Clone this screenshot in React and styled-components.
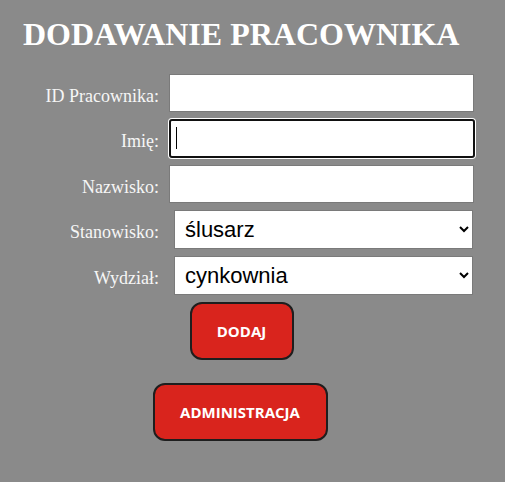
import React from 'react'
import styled, { createGlobalStyle } from 'styled-components'

const GlobalStyle = createGlobalStyle`
  html, body {
    margin: 0;
    padding: 0;
    background: #8a8a8a;
  }
  body {
    font-family: "Liberation Serif", "Times New Roman", serif;
  }
`

const Page = styled.div`
  width: 505px;
  height: 482px;
  padding: 18px 0 0 23px;
  box-sizing: border-box;
`

const Title = styled.h1`
  margin: 0 0 24px;
  font-family: "Liberation Serif", "Times New Roman", serif;
  font-size: 32px;
  font-weight: 700;
  line-height: 32px;
  color: #fff;
`

const Form = styled.form`
  display: grid;
  grid-template-columns: 136px 306px;
  column-gap: 10px;
  row-gap: 7px;
  align-items: center;
`

const Label = styled.label`
  justify-self: end;
  font-family: "Liberation Serif", "Times New Roman", serif;
  font-size: 18px;
  color: #f6f6f6;
  padding-top: 6px;
`

const Field = styled.div`
  position: relative;
  display: flex;
  padding-left: ${p => (p.narrow ? '5px' : '0')};
`

const Input = styled.input`
  width: 305px;
  height: 38px;
  box-sizing: border-box;
  margin: 0;
  border: 1px solid #7a7a7a;
  background: #fff;
  font-size: 20px;
  outline: none;
  ${p => p.focused && `
    width: 306px;
    height: 39px;
    border: 2px solid #111;
    border-radius: 3px;
    box-shadow: 0 0 0 1px #fff;
  `}
`

const Caret = styled.span`
  position: absolute;
  left: 7px;
  top: 8px;
  width: 1px;
  height: 22px;
  background: #000;
`

const Select = styled.select`
  width: 299px;
  height: 39px;
  box-sizing: border-box;
  border: 1px solid #7a7a7a;
  background: #fff;
  font-family: "Liberation Sans", Arial, sans-serif;
  font-size: 22px;
  color: #000;
  padding: 0 6px;
`

const Actions = styled.div`
  grid-column: 1 / -1;
  display: flex;
  flex-direction: column;
  align-items: center;
  width: 434px;
`

const Button = styled.button`
  width: ${p => p.width};
  height: 58px;
  margin-bottom: ${p => p.gap || '0'};
  margin-left: ${p => p.shift || '0'};
  background: #d9241d;
  border: 2px solid #1e1e1e;
  border-radius: 12px;
  color: #fff;
  font-family: "Open Sans", "Noto Sans", sans-serif;
  font-weight: 700;
  font-size: 15px;
`

export default function App() {
  return (
    <Page>
      <GlobalStyle />
      <Title>DODAWANIE PRACOWNIKA</Title>
      <Form onSubmit={e => e.preventDefault()}>
        <Label>ID Pracownika:</Label>
        <Field><Input /></Field>
        <Label>Imię:</Label>
        <Field>
          <Input focused />
          <Caret />
        </Field>
        <Label>Nazwisko:</Label>
        <Field><Input /></Field>
        <Label>Stanowisko:</Label>
        <Field narrow>
          <Select defaultValue="ślusarz">
            <option>ślusarz</option>
            <option>spawacz</option>
          </Select>
        </Field>
        <Label>Wydział:</Label>
        <Field narrow>
          <Select defaultValue="cynkownia">
            <option>cynkownia</option>
            <option>lakiernia</option>
          </Select>
        </Field>
        <Actions>
          <Button width="104px" gap="23px" shift="3px">DODAJ</Button>
          <Button width="175px">ADMINISTRACJA</Button>
        </Actions>
      </Form>
    </Page>
  )
}
